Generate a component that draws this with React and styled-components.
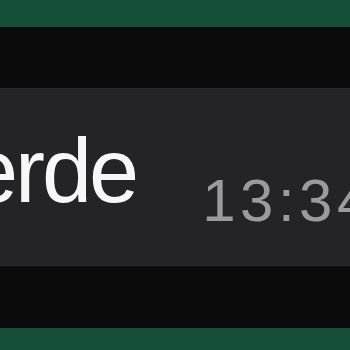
import React from "react";
import styled, { createGlobalStyle } from "styled-components";

const GlobalStyle = createGlobalStyle`
  html, body {
    margin: 0;
    padding: 0;
    background: #0b0b0b;
    overflow: hidden;
  }
`;

const Screen = styled.div`
  width: 350px;
  height: 350px;
  display: flex;
  flex-direction: column;
  background: #0b0b0b;
  overflow: hidden;
  font-family: "Liberation Sans", Arial, sans-serif;
`;

const GreenBar = styled.div`
  height: ${props => props.$height}px;
  flex: none;
  background: #154f37;
`;

const Gap = styled.div`
  height: ${props => props.$height}px;
  flex: none;
`;

const MessageRow = styled.div`
  height: 178px;
  flex: none;
  display: flex;
  align-items: flex-start;
  gap: 66px;
  background: #242426;
  border-top: 1px solid #2c2c2e;
  border-bottom: 1px solid #2c2c2e;
  box-sizing: border-box;
  overflow: hidden;
  white-space: nowrap;
`;

const MessageText = styled.span`
  flex: none;
  margin: 37px 0 0 -32px;
  font-size: 90px;
  line-height: 90px;
  letter-spacing: -3px;
  color: #f7f7f7;
`;

const TimeText = styled.span`
  flex: none;
  margin-top: 82px;
  font-size: 60px;
  line-height: 60px;
  letter-spacing: 4.5px;
  color: #9b9b9f;
`;

export default function App() {
  return (
    <>
      <GlobalStyle />
      <Screen>
        <GreenBar $height={27} />
        <Gap $height={61} />
        <MessageRow>
          <MessageText>erde</MessageText>
          <TimeText>13:34</TimeText>
        </MessageRow>
        <Gap $height={62} />
        <GreenBar $height={22} />
      </Screen>
    </>
  );
}
